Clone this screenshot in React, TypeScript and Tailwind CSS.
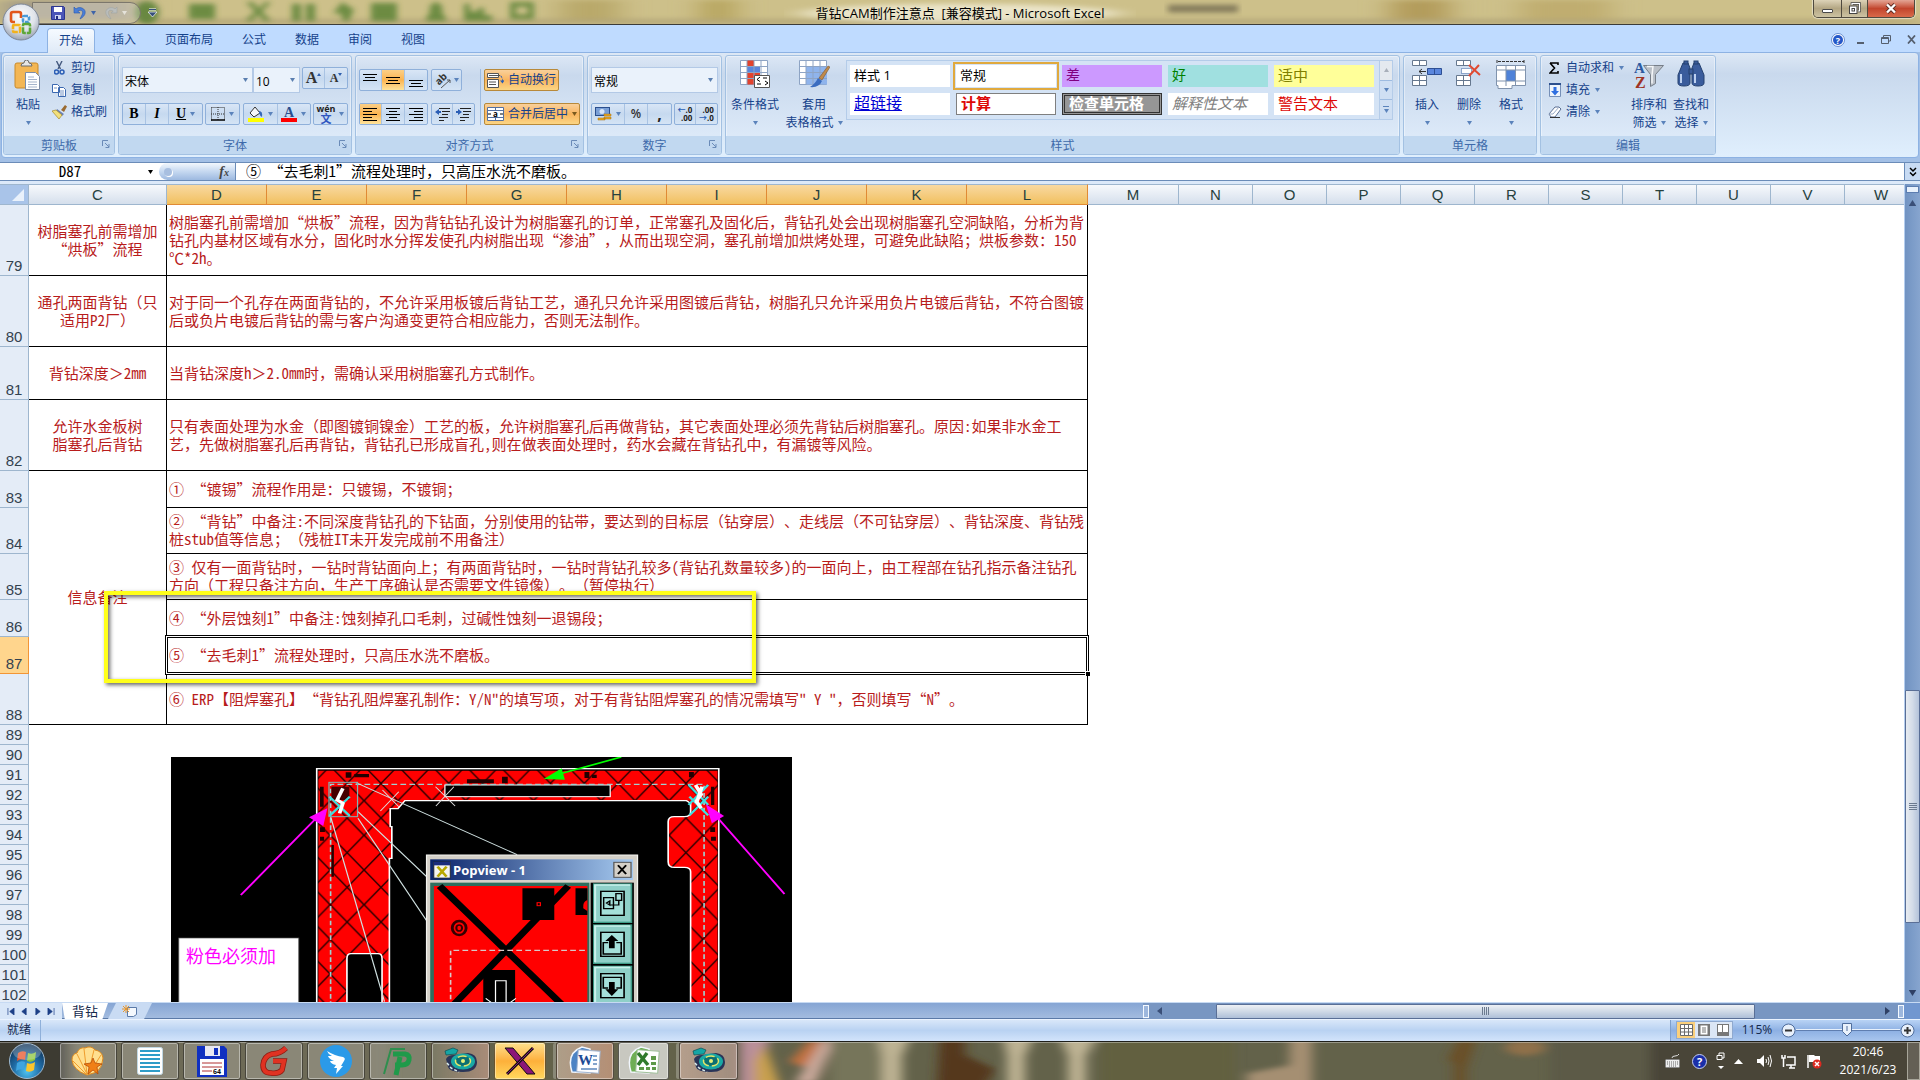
import React from 'react';

const SONG = "font-['Noto_Sans_Mono_CJK_SC','Noto_Sans_CJK_SC',monospace]";

const Caret: React.FC<{ className?: string }> = ({ className = 'text-[#5b83bb]' }) => (
  <svg className={`shrink-0 ${className}`} width="5" height="4" viewBox="0 0 5 4">
    <path d="M0 0h5L2.5 4z" fill="currentColor" />
  </svg>
);

/* ---------- Title bar ---------- */

const OfficeOrb: React.FC = () => (
  <svg className="absolute left-[2px] top-[3px] z-20" width="38" height="38" viewBox="0 0 38 38">
    <defs>
      <radialGradient id="orb" cx="0.5" cy="0.35" r="0.65">
        <stop offset="0" stopColor="#ffffff" />
        <stop offset="0.6" stopColor="#dfe3ea" />
        <stop offset="1" stopColor="#9aa3b3" />
      </radialGradient>
    </defs>
    <circle cx="19" cy="19" r="18" fill="url(#orb)" stroke="#7d8798" />
    <g fill="none" strokeWidth="2.6" strokeLinejoin="round">
      <path d="M17 9h-6q-2 0-2 2v6q0 2 2 2h2M17 9q2 0 2 2v4" stroke="#e2561b" />
      <rect x="21" y="13" width="6" height="6" rx="1" stroke="#4a9ad8" strokeDasharray="4 1" />
      <rect x="11" y="22" width="7" height="7" rx="1" stroke="#f2b21c" strokeDasharray="6 1" />
      <rect x="21" y="21" width="7" height="9" rx="1" stroke="#5da739" strokeDasharray="8 1" />
    </g>
  </svg>
);

const TitleBackdrop: React.FC = () => (
  <svg className="absolute inset-0 w-full h-full" viewBox="0 0 1920 25" preserveAspectRatio="none">
    <defs>
      <filter id="soft" x="-5%" y="-50%" width="110%" height="200%"><feGaussianBlur stdDeviation="3" /></filter>
      <filter id="wide" x="-5%" y="-50%" width="110%" height="200%"><feGaussianBlur stdDeviation="14 3" /></filter>
    </defs>
    <rect width="1920" height="25" fill="#cdc08a" />
    <g filter="url(#wide)">
      <rect x="0" y="0" width="140" height="25" fill="#a59c86" />
      <rect x="560" y="0" width="60" height="25" fill="#b9a96b" />
      <rect x="700" y="0" width="36" height="25" fill="#b7a55f" />
      <rect x="1390" y="0" width="60" height="25" fill="#b39c5b" />
      <rect x="1520" y="0" width="90" height="25" fill="#c0ad70" />
      <rect x="0" y="20" width="1920" height="5" fill="#b3a678" />
    </g>
    <g filter="url(#soft)" fill="#4e7a2c" opacity="0.75">
      <circle cx="147" cy="13" r="12" />
      <rect x="189" y="4" width="26" height="16" />
      <path d="M246 2h7l6 7 6-7h6l-9 10 9 10h-7l-6-7-6 7h-7l10-10z" />
      <rect x="292" y="4" width="9" height="18" /><rect x="306" y="4" width="9" height="18" />
      <path d="M333 14l9-12 12 8-5 12h-6l-2-8z" />
      <rect x="371" y="3" width="26" height="19" />
      <path d="M425 22l5-10q-2-8 6-10 8 2 6 10l5 10z" />
      <path d="M464 22V4h6v8h8V8h6v8h8v6z" />
      <path d="M510 2h24v18h-24zM516 7v8h12V7z" fillRule="evenodd" />
    </g>
    <ellipse cx="960" cy="14" rx="160" ry="10" fill="#fffdf2" opacity="0.6" filter="url(#wide)" />
    <g filter="url(#soft)" fill="#54503c" opacity="0.6"><rect x="1168" y="5" width="70" height="8" /></g>
  </svg>
);

const TitleBar: React.FC = () => (
  <header className="relative h-[25px] shrink-0 border-b border-[#3b3b38] flex items-start justify-center">
    <TitleBackdrop />
    <div className="absolute left-[32px] top-[2px] h-[22px] w-[109px] rounded-r-full border border-[#7c776c] bg-white/25 pl-[18px] flex items-center gap-1">
      <button aria-label="保存">
        <svg width="14" height="14" viewBox="0 0 14 14">
          <path d="M0.500.500h12l1 1v12h-13z" fill="#4b55b8" stroke="#2b3590" />
          <path d="M3 1h8v5H3z" fill="#fff" /><path d="M4 9h6v4H4z" fill="#cfd5f2" /><path d="M5 10h2v3H5z" fill="#222c80" />
        </svg>
      </button>
      <button aria-label="撤消" className="ml-1 flex items-center gap-1">
        <svg width="14" height="14" viewBox="0 0 14 14">
          <path d="M1 1v6h6L4.800 5.200C8 3 11 5 9 9l-2 4c6-3 7-9 2-11-3-1-5 0-6 1z" fill="#4a7fd8" stroke="#2a58ad" strokeWidth="0.600" />
        </svg>
        <Caret className="text-[#3f64a8]" />
      </button>
      <button aria-label="恢复" className="ml-1 flex items-center gap-1 opacity-60">
        <svg width="14" height="14" viewBox="0 0 14 14">
          <path d="M13 1v6H7l2.200-1.800C6 3 3 5 5 9l2 4C1 10 0 4 5 2c3-1 5 0 6 1z" fill="#b9c3cc" stroke="#8c979f" strokeWidth="0.600" />
        </svg>
        <Caret className="text-white" />
      </button>
    </div>
    <button aria-label="自定义快速访问工具栏" className="absolute left-[148px] top-[8px]">
      <svg width="9" height="9" viewBox="0 0 9 9"><path d="M1 1.500h7" stroke="#fff" strokeWidth="2" /><path d="M1 1.500h7" stroke="#37507c" /><path d="M0 4h9L4.500 9z" fill="#37507c" stroke="#fff" strokeWidth="0.700" /></svg>
    </button>
    <OfficeOrb />
    <h1 className="relative text-[13px] leading-[26px] text-black whitespace-pre">背钻CAM制作注意点  [兼容模式] - Microsoft Excel</h1>
    <div className="absolute right-[5px] top-0 flex h-[18px] rounded-b-[5px] border border-t-0 border-[#4f4a3f] overflow-hidden shadow-[0_0_1px_1px_rgba(255,255,255,0.5)]">
      <button aria-label="最小化" className="w-[28px] border-r border-[#4f4a3f] bg-linear-to-b from-[#ddd3b8] via-[#b3a683] to-[#cdc3a3] flex items-center justify-center">
        <span className="mt-1 h-[4px] w-[11px] border border-[#4a4a4a] bg-white rounded-[1px]" />
      </button>
      <button aria-label="向下还原" className="w-[26px] border-r border-[#4f4a3f] bg-linear-to-b from-[#ddd3b8] via-[#b3a683] to-[#cdc3a3] flex items-center justify-center">
        <svg width="13" height="13" viewBox="0 0 13 13" fill="none"><path d="M4 3V1.500h7.500V9H10" stroke="#444" strokeWidth="2.600" /><path d="M4 3V1.500h7.500V9H10" stroke="#fff" strokeWidth="1.200" /><rect x="1.500" y="4" width="7.500" height="7.500" fill="#fff" stroke="#444" /><rect x="4" y="6.500" width="2.500" height="2.500" stroke="#444" /></svg>
      </button>
      <button aria-label="关闭" className="w-[46px] bg-linear-to-b from-[#e3a595] via-[#c2452d] to-[#d9694a] flex items-center justify-center">
        <svg width="12" height="11" viewBox="0 0 12 11"><path d="M2 1.500l8 8M10 1.500l-8 8" stroke="#5b2a22" strokeWidth="4" /><path d="M2 1.500l8 8M10 1.500l-8 8" stroke="#fff" strokeWidth="2.400" /></svg>
      </button>
    </div>
  </header>
);

/* ---------- Ribbon ---------- */

const TABS = [
  { name: '插入', width: 'w-12' },
  { name: '页面布局', width: 'w-[72px]' },
  { name: '公式', width: 'w-12' },
  { name: '数据', width: 'w-12' },
  { name: '审阅', width: 'w-12' },
  { name: '视图', width: 'w-12' },
];

const TabStrip: React.FC = () => (
  <nav className="h-[27px] shrink-0 bg-[#bfdbff] flex items-end pl-[47px] pr-[4px] text-xs text-[#15428b]">
    <button className="relative z-10 -mb-px h-[25px] w-[48px] mr-[5px] rounded-t-[4px] border border-b-0 border-[#8db2e3] bg-linear-to-b from-[#f6faff] to-[#dfeaf7]">开始</button>
    <div className="flex gap-[5px]">
      {TABS.map(t => (
        <button key={t.name} className={`h-[25px] ${t.width}`}>{t.name}</button>
      ))}
    </div>
    <div className="ml-auto flex items-center h-[25px] gap-4">
      <button aria-label="帮助">
        <svg width="14" height="14" viewBox="0 0 14 14"><circle cx="7" cy="7" r="6.500" fill="#fff" stroke="#6b8fd0" /><circle cx="7" cy="7" r="5" fill="#2558c8" /><text x="7" y="10.500" fontSize="9" fontWeight="bold" textAnchor="middle" fill="#fff">?</text></svg>
      </button>
      <button aria-label="最小化窗口" className="-ml-1"><svg width="8" height="10" viewBox="0 0 8 10"><path d="M0 8h7" stroke="#555f6e" strokeWidth="2" /></svg></button>
      <button aria-label="还原窗口"><svg width="10" height="9" viewBox="0 0 10 9" fill="none" stroke="#555f6e"><path d="M2.500 2V.500h7V6H8M.500 2.500h7v6h-7z" /><path d="M.500 3.500h7" /></svg></button>
      <button aria-label="关闭窗口"><svg width="9" height="9" viewBox="0 0 9 9"><path d="M1 .500l7 8M8 .500l-7 8" stroke="#555f6e" strokeWidth="1.800" /></svg></button>
    </div>
  </nav>
);

const Group: React.FC<{ label: string; width: string; launcher?: boolean; children: React.ReactNode }> = ({ label, width, launcher, children }) => (
  <section className={`${width} h-[100px] shrink-0 flex flex-col rounded-[3px] border border-[#a3c1e2] shadow-[inset_0_0_0_1px_rgba(255,255,255,0.4)] bg-linear-to-b from-[#dce7f5] from-0% via-[#c9d9ed] via-20% to-[#dce9f8] to-80% overflow-hidden`}>
    <div className="h-[80px] shrink-0">{children}</div>
    <div className="relative flex-1 bg-[#c1d8f0] text-center text-xs leading-[19px] text-[#3e6aaa]">
      {label}
      {launcher && (
        <button aria-label={`${label}设置`} className="absolute right-[4px] top-[4px]">
          <svg width="8" height="8" viewBox="0 0 8 8" fill="none" stroke="#6a8bb8"><path d="M.500 6V.500H6M3 3l4 4M7 4v3.500H3.500" /></svg>
        </button>
      )}
    </div>
  </section>
);

const SmallButton: React.FC<{ icon: React.ReactNode; label: string; caret?: boolean }> = ({ icon, label, caret }) => (
  <button className="flex h-[22px] items-center gap-[5px] text-xs text-[#15428b] whitespace-nowrap">
    <span className="w-[13px] flex justify-center">{icon}</span>
    {label}
    {caret && <Caret />}
  </button>
);

const BigButton: React.FC<{ icon: React.ReactNode; lines: string[]; width: string }> = ({ icon, lines, width }) => (
  <button className={`${width} flex flex-col items-center text-xs leading-[17px] text-[#15428b] whitespace-nowrap`}>
    <span className="h-[36px] pt-[4px]">{icon}</span>
    <span className="h-[20px] pt-1">{lines[0]}</span>
    <span className="h-[17px] flex items-center gap-1 pt-1">{lines[1]}<Caret /></span>
  </button>
);

const ButtonBox: React.FC<{ children: React.ReactNode; className?: string }> = ({ children, className = '' }) => (
  <div className={`h-[22px] flex items-stretch rounded-[2px] border border-[#8fb0da] bg-linear-to-b from-[#d9e6f6] via-[#c6d9ef] to-[#d5e4f5] divide-x divide-[#a9c3e3] ${className}`}>{children}</div>
);

const Tool: React.FC<{ label: string; width: string; caret?: boolean; active?: boolean; children: React.ReactNode }> = ({ label, width, caret, active, children }) => (
  <button aria-label={label} aria-pressed={active} className={`${width} flex items-center justify-center gap-1 ${active ? 'bg-linear-to-b from-[#fbcf86] via-[#fbb44f] to-[#fee39a]' : ''}`}>
    {children}
    {caret && <Caret />}
  </button>
);

const Picker: React.FC<{ label: string; value: string; width: string }> = ({ label, value, width }) => (
  <div className={`relative h-[26px] ${width} border border-[#b3c9e6] bg-[#eaf2fb]`}>
    <select aria-label={label} defaultValue={value} className="appearance-none w-full h-full pl-[2px] pb-[3px] bg-transparent text-xs text-black outline-none">
      <option>{value}</option>
    </select>
    <Caret className="absolute right-1 top-[10px] text-[#5b7fb0] pointer-events-none" />
  </div>
);

const Lines: React.FC<{ rows: [number, number, number][] }> = ({ rows }) => (
  <svg width="15" height="16" viewBox="0 0 15 16" stroke="#000" strokeWidth="1">
    {rows.map(([x1, x2, y]) => <path key={y} d={`M${x1} ${y + 0.5}H${x2}`} />)}
  </svg>
);

const ClipboardGroup: React.FC = () => (
  <Group label="剪贴板" width="w-[112px]" launcher>
    <div className="flex gap-1 pl-[3px]">
      <BigButton width="w-[42px]" lines={['粘贴', '']} icon={
        <svg width="28" height="30" viewBox="0 0 28 30">
          <rect x="1" y="3" width="23" height="25" rx="2" fill="#f3b654" stroke="#c98a2b" />
          <path d="M7 6q0-3 3-3 0-3 2.500-3t2.500 3q3 0 3 3z" fill="#e6e6e6" stroke="#6c6c6c" />
          <path d="M11.500 12.500h10l4 4v13h-14z" fill="#fff" stroke="#7c8da8" />
          <path d="M14 17h6M14 19.500h9M14 22h9M14 24.500h9M14 27h9" stroke="#a5b4cb" />
        </svg>
      } />
      <div className="pt-px">
        <SmallButton label="剪切" icon={<svg width="11" height="14" viewBox="0 0 11 14" fill="none"><path d="M2.500 0l4 8M8 0L4 8" stroke="#44597e" strokeWidth="1.400" /><circle cx="2.500" cy="11" r="2" stroke="#2b5eb5" strokeWidth="1.500" /><circle cx="8" cy="11" r="2" stroke="#2b5eb5" strokeWidth="1.500" /></svg>} />
        <SmallButton label="复制" icon={<svg className="shrink-0" width="15" height="13" viewBox="0 0 15 13" fill="#fff" stroke="#3b68b0"><path d="M.500.500h5l2 2v6h-7zM6.500 3.500h5l2 2v7h-7z" /><path d="M2 4h3M8 7h4M8 9h4M8 11h4" strokeWidth="0.700" /></svg>} />
        <SmallButton label="格式刷" icon={<svg className="shrink-0" width="15" height="14" viewBox="0 0 15 14"><path d="M9 5l4-5 2 1.500L12 7z" fill="#9a6b32" /><path d="M5 4l7 5-2 2-6-5z" fill="#6a7fb5" /><path d="M0 6l4-1 6 5-3 4z" fill="#f2e07c" stroke="#a88b26" strokeWidth="0.700" /></svg>} />
      </div>
    </div>
  </Group>
);

const FontGroup: React.FC = () => (
  <Group label="字体" width="w-[234px]" launcher>
    <div className="px-[3px] pt-[11px] flex flex-col gap-[10px]">
      <div className="flex justify-between">
        <div className="flex">
          <Picker label="字体" value="宋体" width="w-[131px]" />
          <Picker label="字号" value="10" width="w-[47px]" />
        </div>
        <ButtonBox>
          <Tool label="增大字号" width="w-[22px]"><span className="font-['Liberation_Serif',serif] font-bold text-base leading-5 text-[#333]">A</span><svg className="-ml-1 -mt-2 shrink-0" width="4" height="3" viewBox="0 0 4 3"><path d="M0 3h4L2 0z" fill="#2f5fae" /></svg></Tool>
          <Tool label="减小字号" width="w-[22px]"><span className="font-['Liberation_Serif',serif] font-bold text-xs leading-5 text-[#333]">A</span><svg className="-ml-1 -mt-2 shrink-0" width="4" height="3" viewBox="0 0 4 3"><path d="M0 0h4L2 3z" fill="#2f5fae" /></svg></Tool>
        </ButtonBox>
      </div>
      <div className="flex justify-between">
        <ButtonBox className="font-['Liberation_Serif',serif] text-sm text-black">
          <Tool label="加粗" width="w-[23px]"><b>B</b></Tool>
          <Tool label="倾斜" width="w-[23px]"><i className="font-bold">I</i></Tool>
          <Tool label="下划线" width="w-[33px]" caret><span className="underline font-bold">U</span></Tool>
        </ButtonBox>
        <ButtonBox>
          <Tool label="边框" width="w-[33px]" caret>
            <svg width="14" height="14" viewBox="0 0 14 14" fill="none" stroke="#333"><path d="M.500.500h13v13M.500.500v13M7 0v13M0 7h14" strokeDasharray="1 1" /><path d="M0 13h14" stroke="#000" strokeWidth="1.500" /></svg>
          </Tool>
        </ButtonBox>
        <ButtonBox>
          <Tool label="填充颜色" width="w-[34px]" caret>
            <svg width="16" height="16" viewBox="0 0 16 16"><path d="M7 1l5 6-6 4-4-4z" fill="#f5f7fb" stroke="#333" /><path d="M11 5q4 0 3 6-2-1-3-4z" fill="#3568b8" /><rect y="12" width="16" height="4" fill="#ff0" /></svg>
          </Tool>
          <Tool label="字体颜色" width="w-[32px]" caret>
            <svg width="16" height="16" viewBox="0 0 16 16"><text x="8" y="11" fontSize="14" fontWeight="bold" textAnchor="middle" fontFamily="Liberation Serif" fill="#2c4f8f">A</text><rect y="12" width="16" height="4" fill="#f00" /></svg>
          </Tool>
        </ButtonBox>
        <ButtonBox>
          <Tool label="拼音" width="w-[33px]" caret>
            <span className="flex flex-col items-center text-[9px] leading-[9px] font-bold text-[#222]">
              <span>wén</span>
              <span className="text-[11px] leading-[11px] text-[#2f56c0]">文</span>
            </span>
          </Tool>
        </ButtonBox>
      </div>
    </div>
  </Group>
);

const AlignGroup: React.FC = () => (
  <Group label="对齐方式" width="w-[229px]" launcher>
    <div className="flex px-[3px] pt-[13px]">
      <div className="flex flex-col gap-[12px] border-r border-[#9dbbe0] pr-[4px] w-[122px] shrink-0">
        <div className="flex gap-[3px]">
          <ButtonBox>
            <Tool label="顶端对齐" width="w-[22px]"><Lines rows={[[0, 14, 2], [2, 12, 5], [0, 14, 8]]} /></Tool>
            <Tool label="垂直居中" width="w-[23px]" active><Lines rows={[[0, 14, 5], [2, 12, 8], [0, 14, 11]]} /></Tool>
            <Tool label="底端对齐" width="w-[22px]"><Lines rows={[[0, 14, 8], [2, 12, 11], [0, 14, 14]]} /></Tool>
          </ButtonBox>
          <ButtonBox>
            <Tool label="方向" width="w-[29px]" caret>
              <svg className="overflow-visible" width="15" height="15" viewBox="0 0 15 15"><text x="7" y="9" fontSize="10" fontWeight="bold" textAnchor="middle" fill="#333" transform="rotate(-45 7 7)">ab</text><path d="M6 15l9-8M12 7h3v3" stroke="#555" fill="none" /></svg>
            </Tool>
          </ButtonBox>
        </div>
        <div className="flex gap-[3px]">
          <ButtonBox>
            <Tool label="左对齐" width="w-[22px]" active><Lines rows={[[0, 14, 2], [0, 9, 5], [0, 14, 8], [0, 9, 11], [0, 14, 14]]} /></Tool>
            <Tool label="居中" width="w-[23px]"><Lines rows={[[0, 14, 2], [3, 11, 5], [0, 14, 8], [3, 11, 11], [0, 14, 14]]} /></Tool>
            <Tool label="右对齐" width="w-[22px]"><Lines rows={[[0, 14, 2], [5, 14, 5], [0, 14, 8], [5, 14, 11], [0, 14, 14]]} /></Tool>
          </ButtonBox>
          <ButtonBox>
            <Tool label="减少缩进" width="w-[21px]">
              <svg width="15" height="15" viewBox="0 0 15 15"><path d="M0 5l4-3v2h2v2H4v2z" fill="#2b5eb5" /><path d="M4 1.500h11M7 4.500h8M7 7.500h6M4 10.500h9M4 13.500h5" stroke="#222" /></svg>
            </Tool>
            <Tool label="增加缩进" width="w-[21px]">
              <svg width="15" height="15" viewBox="0 0 15 15"><path d="M6 5L2 2v2H0v2h2v2z" fill="#2b5eb5" /><path d="M4 1.500h11M7 4.500h8M7 7.500h6M4 10.500h9M4 13.500h5" stroke="#222" /></svg>
            </Tool>
          </ButtonBox>
        </div>
      </div>
      <div className="flex flex-col items-start gap-[12px] pl-[3px] text-xs text-[#15428b] whitespace-nowrap">
        <button aria-pressed="true" className="h-[22px] px-[2px] flex items-center gap-1 rounded-[2px] border border-[#b8893a] bg-linear-to-b from-[#f9d09a] via-[#f9b55e] to-[#fbd584]">
          <svg width="17" height="16" viewBox="0 0 17 16" fill="#fff" stroke="#555"><path d="M.500 1.500h11v4H.500zM.500 7.500h11v8H.500z" /><path d="M2 3.500h11M2 10h7M2 12.500h7" /><path d="M13 3.500q3 0 2 5l-2 0 2.500 3 2-3h-1" fill="#2b5eb5" stroke="none" /></svg>
          自动换行
        </button>
        <button aria-pressed="true" className="h-[22px] px-[2px] flex items-center gap-1 rounded-[2px] border border-[#b8893a] bg-linear-to-b from-[#f9d09a] via-[#f9b55e] to-[#fbd584]">
          <svg width="17" height="14" viewBox="0 0 17 14" fill="#fff" stroke="#5470a0"><path d="M.500.500h16v13H.500zM.500 3.500h16M.500 10.500h16M8.500.500v3M8.500 10.500v3" /><text x="8.500" y="9.500" fontSize="8" fontWeight="bold" textAnchor="middle" fill="#000" stroke="none">a</text><path d="M1 7h3M16 7h-3" stroke="#000" /></svg>
          合并后居中
          <Caret className="text-[#7a5a1e]" />
        </button>
      </div>
    </div>
  </Group>
);

const NumberGroup: React.FC = () => (
  <Group label="数字" width="w-[135px]" launcher>
    <div className="px-[3px] pt-[11px] flex flex-col gap-[10px]">
      <Picker label="数字格式" value="常规" width="w-full" />
      <div className="flex justify-between">
        <ButtonBox>
          <Tool label="会计数字格式" width="w-[33px]" caret>
            <svg width="17" height="16" viewBox="0 0 17 16"><rect x="0.500" y="1.500" width="14" height="8" fill="#7a9fd6" stroke="#2b4f8e" /><circle cx="7" cy="5.500" r="2.500" fill="#d6e4f7" /><path d="M9 8h7v2H9zM9 11h7v2H9zM3 12h7v2H3z" fill="#e9a623" stroke="#a8700c" strokeWidth="0.500" /></svg>
          </Tool>
          <Tool label="百分比样式" width="w-[23px]"><span className="text-xs font-semibold text-[#333]">%</span></Tool>
          <Tool label="千位分隔样式" width="w-[23px]"><span className="text-base leading-3 font-bold text-[#222]">,</span></Tool>
        </ButtonBox>
        <ButtonBox className="text-[8px] leading-[8px] font-bold text-[#222]">
          <Tool label="增加小数位数" width="w-[21px]"><span className="text-right"><span className="text-[#2b5eb5]">←</span>.0<br />.00</span></Tool>
          <Tool label="减少小数位数" width="w-[21px]"><span className="text-right">.00<br /><span className="text-[#2b5eb5]">→</span>.0</span></Tool>
        </ButtonBox>
      </div>
    </div>
  </Group>
);

const STYLES = [
  { name: '样式 1', look: 'bg-white text-black text-[13px]' },
  { name: '常规', look: 'bg-white text-black text-[13px] outline-2 outline-offset-1 outline-[#e0a93e]' },
  { name: '差', look: 'bg-[#cc99ff] text-[#800080] text-sm' },
  { name: '好', look: 'bg-[#a0e0e0] text-[#008000] text-sm' },
  { name: '适中', look: 'bg-[#ffff99] text-[#808000] text-[15px]' },
  { name: '超链接', look: 'bg-white text-[#0000d4] underline text-base' },
  { name: '计算', look: 'bg-white text-[#dd0806] font-bold text-[15px] border border-[#7f7f7f]' },
  { name: '检查单元格', look: 'bg-[#969696] text-white font-bold text-[15px] border-3 border-double border-[#333333]' },
  { name: '解释性文本', look: 'bg-white text-[#808080] italic text-[15px]' },
  { name: '警告文本', look: 'bg-white text-[#dd0806] text-[15px]' },
];

const StylesGroup: React.FC = () => (
  <Group label="样式" width="w-[675px]">
    <div className="flex pl-[2px]">
      <BigButton width="w-[54px]" lines={['条件格式', '']} icon={
        <svg width="31" height="28" viewBox="0 0 31 28">
          <path d="M.500.500h27v24H.500z" fill="#fff" stroke="#8ea4c4" />
          <path d="M7 .500h7v6H7zM7 12.500h13v6H7z" fill="#e2432e" /><path d="M7 6.500h13v6H7z" fill="#5a86dd" /><path d="M7 18.500h7v6H7z" fill="#e2432e" />
          <path d="M7 0v25M14 0v25M21 0v25M0 6.500h28M0 12.500h28M0 18.500h28" stroke="#8ea4c4" />
          <path d="M14.500 15.500h15v12h-15z" fill="#fff" stroke="#555" /><path d="M20 17l-3 2.500 3 2M17 24h4M23 18h4M25 21l3 2-3 2" stroke="#000" fill="none" />
        </svg>
      } />
      <BigButton width="w-[64px]" lines={['套用', '表格格式']} icon={
        <svg width="31" height="28" viewBox="0 0 31 28">
          <path d="M.500.500h27v24H.500z" fill="#fff" stroke="#8ea4c4" /><path d="M7 6.500h21v18H7z" fill="#8fb4ec" />
          <path d="M7 0v25M14 0v25M21 0v25M0 6.500h28M0 12.500h28M0 18.500h28" stroke="#8ea4c4" />
          <path d="M29 6l2 1-8 13-3-2z" fill="#c08a4a" stroke="#6e4b20" strokeWidth="0.500" /><path d="M19 18l4 3q-3 7-12 6 5-3 8-9z" fill="#3a6cc0" />
        </svg>
      } />
      <div className="mt-[4px] h-[60px] flex-1 mr-[6px] flex border border-[#b4cce9] bg-[#d4e3f5]">
        <div className="flex-1 grid grid-cols-5 gap-[6px] pl-[3px] pr-[5px] py-[4px]">
          {STYLES.map(s => (
            <button key={s.name} className={`h-[22px] pl-[4px] pb-[3px] flex items-center text-left leading-[18px] whitespace-nowrap ${s.look}`}>{s.name}</button>
          ))}
        </div>
        <div className="w-[13px] flex flex-col divide-y divide-[#9ebbe0] border-l border-[#b4cce9]">
          <button aria-label="上一行" className="flex-1 bg-[#e4e9ef] flex items-center justify-center"><Caret className="rotate-180 text-[#a9b0ba]" /></button>
          <button aria-label="下一行" className="flex-1 bg-[#cfdff3] flex items-center justify-center"><Caret /></button>
          <button aria-label="更多样式" className="flex-1 bg-[#cfdff3] flex flex-col gap-[2px] items-center justify-center"><span className="h-px w-[6px] bg-[#5b83bb]" /><Caret /></button>
        </div>
      </div>
    </div>
  </Group>
);

const CellsGroup: React.FC = () => (
  <Group label="单元格" width="w-[134px]">
    <div className="flex pl-[2px]">
      <BigButton width="w-[42px]" lines={['插入', '']} icon={
        <svg width="30" height="27" viewBox="0 0 30 27" fill="#fff" stroke="#66788f"><path d="M.500.500h14v5H.500zM7.500.500v5M.500 15.500h14v10H.500zM.500 20.500h14M7.500 15.500v10" /><path d="M15.500 8.500h14v6h-14z" fill="#5a86dd" stroke="#2d4f94" /><path d="M22.500 8.500v6" stroke="#2d4f94" /><path d="M14 11.500H7M10 9l-3 2.500L10 14" stroke="#333" fill="none" /></svg>
      } />
      <BigButton width="w-[42px]" lines={['删除', '']} icon={
        <svg width="26" height="27" viewBox="0 0 26 27" fill="#fff" stroke="#66788f"><path d="M.500.500h14v5H.500zM7.500.500v5M.500 15.500h14v10H.500zM.500 20.500h14M7.500 15.500v10" /><path d="M5.500 8.500h10v5h-10z" stroke="#335c9c" strokeDasharray="1 1" /><path d="M13 5l11 10M23 5L13 16" stroke="#e04a32" strokeWidth="2" /></svg>
      } />
      <BigButton width="w-[42px]" lines={['格式', '']} icon={
        <svg width="31" height="29" viewBox="0 0 31 29" fill="#fff" stroke="#8093ad"><path d="M2 1.500h26M1 0v3M28 0v3" stroke="#333" strokeDasharray="3 1" /><path d="M.500 5.500h29v20H16v3H2v-3H.500z" /><path d="M10 10h9v11h-9z" fill="#4f82d8" stroke="none" /><path d="M10 5v21M19.500 5v21M0 10h30M0 21h30" /></svg>
      } />
    </div>
  </Group>
);

const EditGroup: React.FC = () => (
  <Group label="编辑" width="w-[176px]">
    <div className="flex pl-[7px]">
      <div className="pt-px w-[80px] shrink-0">
        <SmallButton caret label="自动求和" icon={<svg width="11" height="12" viewBox="0 0 11 12"><path d="M1 1h8v2M1 1l4.500 5L1 11h8V9" stroke="#000" strokeWidth="1.600" fill="none" /></svg>} />
        <SmallButton caret label="填充" icon={<svg width="12" height="14" viewBox="0 0 12 14"><path d="M.500.500h11v13H.500z" fill="#eef4fc" stroke="#7690b8" /><path d="M0 0h12v2H0z" fill="#2b4f8e" /><path d="M4.500 4h3v4H10l-4 4.500L2 8h2.500z" fill="#2f6fe0" /></svg>} />
        <SmallButton caret label="清除" icon={<svg className="shrink-0" width="14" height="12" viewBox="0 0 14 12"><path d="M1 8l6-7h4l2 2-6 8H3z" fill="#fff" stroke="#5a6f92" /><path d="M1 8h4l6-7" fill="none" stroke="#9aabc6" /><path d="M2 11.500h10" stroke="#333" /></svg>} />
      </div>
      <BigButton width="w-[42px]" lines={['排序和', '筛选']} icon={
        <svg width="30" height="30" viewBox="0 0 30 30"><text x="0" y="13" fontSize="15" fontWeight="bold" fontFamily="Liberation Serif" fill="#2c5aa0">A</text><text x="1" y="28" fontSize="16" fontWeight="bold" fontFamily="Liberation Serif" fill="#9e3324">Z</text><path d="M9.500 5.500h20l-8 9v9l-5 3v-12z" fill="#b9bfc7" stroke="#767e88" /><path d="M13 6.500h6l-1 9v8" stroke="#f4f6f8" strokeWidth="1.500" fill="none" /></svg>
      } />
      <BigButton width="w-[42px]" lines={['查找和', '选择']} icon={
        <svg width="28" height="28" viewBox="0 0 28 28" fill="#3a5c9c" stroke="#24406f"><path d="M6 3h5l2 5v15q0 3-6 3t-6-3v-8zM17 3h5l5 12v8q0 3-6 3t-6-3V8z" /><rect x="7" y="1" width="4" height="3" /><rect x="17" y="1" width="4" height="3" /><rect x="12" y="9" width="4" height="5" /><path d="M4 14v9M18 14v9" stroke="#bcd0f0" strokeWidth="2" /></svg>
      } />
    </div>
  </Group>
);

const Ribbon: React.FC = () => (
  <div className="shrink-0 bg-[#a3c0e6] pb-[4px]">
    <div className="h-[106px] mx-px rounded-[4px] border border-[#8db2e3] bg-linear-to-b from-[#dde8f5] from-0% via-[#c9d9ed] via-20% to-[#e0effd] flex gap-[3px] px-px pt-[2px]">
      <ClipboardGroup />
      <FontGroup />
      <AlignGroup />
      <NumberGroup />
      <StylesGroup />
      <CellsGroup />
      <EditGroup />
    </div>
  </div>
);

const FormulaBar: React.FC = () => (
  <div className={`shrink-0 bg-[#dce9f9] pb-[3px] ${SONG} text-[15px] text-black`}>
    <div className="h-[19px] flex border-y border-[#6b8cb8] bg-white">
      <div className="w-[159px] flex items-center pr-[6px]">
        <input aria-label="名称框" defaultValue="D87" className="min-w-0 flex-1 pr-2 text-center outline-none" />
        <Caret className="text-black" />
      </div>
      <div className="w-[77px] rounded-l-full border-r border-[#6b8cb8] bg-linear-to-b from-[#f2f7fd] via-[#c5d8f0] to-[#9db9e0] flex items-center justify-between pl-[5px] pr-[6px]">
        <span className="size-[8px] rounded-full bg-[#a8bfe0] shadow-[1px_1px_0_#fff]" />
        <button className="font-['Liberation_Serif',serif] italic font-bold text-sm leading-none text-[#444]">f<span className="text-[10px]">x</span></button>
      </div>
      <input aria-label="编辑栏" defaultValue="⑤ “去毛刺1”流程处理时，只高压水洗不磨板。" className="min-w-0 flex-1 pl-[10px] outline-none [text-spacing-trim:space-all]" />
      <button aria-label="展开编辑栏" className="w-[16px] border-l border-[#6b8cb8] bg-[#c8dbf3] flex items-center justify-center">
        <svg width="8" height="10" viewBox="0 0 8 10" fill="none" stroke="#000" strokeWidth="1.500"><path d="M1 1l3 3 3-3M1 5.500l3 3 3-3" /></svg>
      </button>
    </div>
  </div>
);

/* ---------- Sheet ---------- */

const COLUMNS = [
  { name: 'C', width: 'w-[138px]', selected: false },
  { name: 'D', width: 'w-[100px]', selected: true },
  { name: 'E', width: 'w-[100px]', selected: true },
  { name: 'F', width: 'w-[100px]', selected: true },
  { name: 'G', width: 'w-[100px]', selected: true },
  { name: 'H', width: 'w-[100px]', selected: true },
  { name: 'I', width: 'w-[100px]', selected: true },
  { name: 'J', width: 'w-[100px]', selected: true },
  { name: 'K', width: 'w-[100px]', selected: true },
  { name: 'L', width: 'w-[121px]', selected: true },
  { name: 'M', width: 'w-[91px]', selected: false },
  { name: 'N', width: 'w-[74px]', selected: false },
  { name: 'O', width: 'w-[74px]', selected: false },
  { name: 'P', width: 'w-[74px]', selected: false },
  { name: 'Q', width: 'w-[74px]', selected: false },
  { name: 'R', width: 'w-[74px]', selected: false },
  { name: 'S', width: 'w-[74px]', selected: false },
  { name: 'T', width: 'w-[74px]', selected: false },
  { name: 'U', width: 'w-[74px]', selected: false },
  { name: 'V', width: 'w-[74px]', selected: false },
  { name: 'W', width: '', selected: false },
];

type Row = { n: number; height: string; title?: string[]; span?: number; text: string[] };

const ROWS: Row[] = [
  {
    n: 79, height: 'h-[71px]', title: ['树脂塞孔前需增加', '“烘板”流程'],
    text: [
      '树脂塞孔前需增加“烘板”流程，因为背钻钻孔设计为树脂塞孔的订单，正常塞孔及固化后，背钻孔处会出现树脂塞孔空洞缺陷，分析为背',
      '钻孔内基材区域有水分，固化时水分挥发使孔内树脂出现“渗油”，从而出现空洞，塞孔前增加烘烤处理，可避免此缺陷；烘板参数：150',
      '℃*2h。',
    ],
  },
  {
    n: 80, height: 'h-[71px]', title: ['通孔两面背钻（只', '适用P2厂）'],
    text: [
      '对于同一个孔存在两面背钻的，不允许采用板镀后背钻工艺，通孔只允许采用图镀后背钻，树脂孔只允许采用负片电镀后背钻，不符合图镀',
      '后或负片电镀后背钻的需与客户沟通变更符合相应能力，否则无法制作。',
    ],
  },
  { n: 81, height: 'h-[53px]', title: ['背钻深度＞2mm'], text: ['当背钻深度h＞2.0mm时，需确认采用树脂塞孔方式制作。'] },
  {
    n: 82, height: 'h-[71px]', title: ['允许水金板树', '脂塞孔后背钻'],
    text: [
      '只有表面处理为水金（即图镀铜镍金）工艺的板，允许树脂塞孔后再做背钻，其它表面处理必须先背钻后树脂塞孔。原因:如果非水金工',
      '艺，先做树脂塞孔后再背钻，背钻孔已形成盲孔,则在做表面处理时，药水会藏在背钻孔中，有漏镀等风险。',
    ],
  },
  { n: 83, height: 'h-[37px]', title: ['信息备注'], span: 6, text: ['① “镀锡”流程作用是：只镀锡，不镀铜；'] },
  {
    n: 84, height: 'h-[46px]',
    text: [
      '② “背钻”中备注:不同深度背钻孔的下钻面，分别使用的钻带，要达到的目标层（钻穿层）、走线层（不可钻穿层）、背钻深度、背钻残',
      '桩stub值等信息；（残桩IT未开发完成前不用备注）',
    ],
  },
  {
    n: 85, height: 'h-[46px]',
    text: [
      '③ 仅有一面背钻时，一钻时背钻面向上；有两面背钻时，一钻时背钻孔较多(背钻孔数量较多)的一面向上，由工程部在钻孔指示备注钻孔',
      '方向（工程只备注方向，生产工序确认是否需要文件镜像）。（暂停执行）',
    ],
  },
  { n: 86, height: 'h-[37px]', text: ['④ “外层蚀刻1”中备注:蚀刻掉孔口毛刺，过碱性蚀刻一退锡段；'] },
  { n: 87, height: 'h-[37px]', text: ['⑤ “去毛刺1”流程处理时，只高压水洗不磨板。'] },
  { n: 88, height: 'h-[51px]', text: ['⑥ ERP【阻焊塞孔】“背钻孔阻焊塞孔制作：Y/N"的填写项，对于有背钻阻焊塞孔的情况需填写" Y "，否则填写“N”。'] },
];

const EMPTY_ROWS = [89, 90, 91, 92, 93, 94, 95, 96, 97, 98, 99, 100, 101, 102];

const RowHead: React.FC<{ n: number }> = ({ n }) => (
  <th scope="row" className={`p-0 align-bottom text-center font-normal text-[15px] leading-[19px] text-[#33424f] font-['Liberation_Sans',sans-serif] border-b border-r ${n === 87 ? 'bg-[#ffd58d] border-[#f29536]' : 'bg-[#e4ecf7] border-[#9eb6ce]'}`}>{n}</th>
);

const Sheet: React.FC = () => (
  <table className="w-[calc(100%+14px)] table-fixed border-separate border-spacing-0">
    <colgroup>
      <col className="w-[29px]" />
      {COLUMNS.map(c => <col key={c.name} className={c.width} />)}
    </colgroup>
    <thead className="font-['Liberation_Sans',sans-serif] text-[15px] leading-[18px] text-[#27413e]">
      <tr className="h-[21px]">
        <th className="p-0 border border-l-0 border-[#9eb6ce] bg-[#a9c4e9]">
          <svg className="ml-auto mr-1" width="12" height="12" viewBox="0 0 12 12"><path d="M12 0v12H0z" fill="#e9f1fb" /></svg>
        </th>
        {COLUMNS.map(c => (
          <th key={c.name} scope="col" className={`p-0 font-normal border-y border-r ${c.selected ? 'border-[#e08a35] border-t-[#9eb6ce] bg-linear-to-b from-[#f9d9a0] to-[#f1c05e]' : 'border-[#9eb6ce] bg-linear-to-b from-[#f7f9fc] to-[#d5dfec]'}`}>{c.name}</th>
        ))}
      </tr>
    </thead>
    <tbody className={`${SONG} text-[15px] leading-[18px] text-[#b81c1c] [text-spacing-trim:space-all]`}>
      {ROWS.map(r => (
        <tr key={r.n} className={r.height}>
          <RowHead n={r.n} />
          {r.title && (
            <td rowSpan={r.span} className="p-0 pb-px text-center align-middle border-r border-b border-black">
              {r.title.map(t => <div key={t} className="whitespace-nowrap">{t}</div>)}
            </td>
          )}
          <td colSpan={9} className="relative p-0 pl-[2px] pb-px align-middle border-r border-b border-black">
            {r.text.map(t => <div key={t} className="whitespace-pre">{t}</div>)}
            {r.n === 87 && (
              <div className="absolute -left-[2px] -right-[2px] -top-[2px] -bottom-[2px] border border-black shadow-[inset_0_0_0_1px_#fff,inset_0_0_0_2px_#000]">
                <span className="absolute -right-[3px] -bottom-[3px] size-[6px] bg-black border border-white" />
              </div>
            )}
          </td>
          <td colSpan={11} />
        </tr>
      ))}
      {EMPTY_ROWS.map(n => (
        <tr key={n} className="h-[20px]">
          <RowHead n={n} />
          <td colSpan={21} className="p-0" />
        </tr>
      ))}
    </tbody>
  </table>
);

const CircuitDrawing: React.FC = () => (
  <svg className="absolute left-[171px] top-[573px]" width="621" height="250" viewBox="0 0 621 250">
    <defs>
      <pattern id="mesh" width="83" height="104" patternUnits="userSpaceOnUse" x="500" y="78">
        <rect width="83" height="104" fill="#ff0000" />
        <path d="M0 0l83 104M83 0L0 104" stroke="#2a0000" strokeWidth="4" />
      </pattern>
      <linearGradient id="caption"><stop offset="0" stopColor="#0a246a" /><stop offset="1" stopColor="#a6caf0" /></linearGradient>
    </defs>
    <rect width="621" height="250" fill="#000" />
    <g transform="translate(-11 -17) scale(0.40816 0.33333)">
      <rect x="384" y="86" width="985" height="760" fill="none" stroke="#fff" strokeWidth="4" />
      <path d="M388 92H1366V820H1300V395Q1300 382 1285 382H1260Q1245 382 1245 365V245Q1245 230 1260 230H1285Q1300 230 1300 215V182H600L583 206H564V260H568V355H562V820H388z" fill="url(#mesh)" />
      <path d="M1300 820V395Q1300 382 1285 382H1260Q1245 382 1245 365V245Q1245 230 1260 230H1285Q1300 230 1300 215V190L1290 182H600L583 206H564V260H568V355H562V820" fill="none" stroke="#fff" strokeWidth="4" />
      <path d="M458 820V655q0-14 10-14h66q10 0 10 14v165z" fill="#000" stroke="#fff" strokeWidth="4" />
      <rect x="698" y="135" width="405" height="35" fill="#000" stroke="#fff" strokeWidth="3" />
      <path d="M418 820V133H1333V820" fill="none" stroke="#9fd0d0" strokeWidth="4" strokeDasharray="14 8" />
      <path d="M455 97h14v16h-14zM476 102h36v10h-36zM752 118h66v12h-66zM838 110h14v20h-14zM1040 96h12v18h-12zM1058 104h12v10h-12zM1296 96h12v16h-12zM392 140h9v60h-9zM420 315h6v95h-6zM1350 140h8v55h-8zM392 262h12v14h-12zM1348 262h12v14h-12zM392 290h10v12h-10zM1350 290h12v12h-12z" fill="#200" />
      <path d="M675 140l48 58M720 140l-44 58M545 150l40 50M585 155l-45 58" stroke="#ddd" strokeWidth="2.500" />
      <path d="M480 128L875 344M485 215L655 412M485 235L655 545M418 230L550 785" stroke="#cfe0e0" strokeWidth="3" />
      <rect x="414" y="127" width="70" height="103" fill="none" stroke="#7fb5b5" strokeWidth="3" />
      <path d="M420 140h44v40h-44z" fill="#400" />
      <path d="M415 170l50 58M465 170l-50 58M1295 135l48 60M1343 135l-48 60M1297 170l46 56M1343 170l-46 56" stroke="#3fe0e0" strokeWidth="6" />
      <path d="M448 145l-14 35 14 10-8 30M1312 135l14 28-12 20 12 22M1328 140l-14 50" stroke="#fff" strokeWidth="9" fill="none" />
      <path d="M198 465L385 232M1530 462L1365 232" stroke="#f0f" strokeWidth="5" />
      <path d="M410 205L365 232 400 258zM1337 192l45 36-30 22z" fill="#f0f" />
      <path d="M1130 51L985 100" stroke="#0f0" strokeWidth="5" />
      <path d="M940 117l44-32 8 34z" fill="#0f0" />

      <rect x="653" y="345" width="517" height="500" fill="#d4d0c8" stroke="#f4f4f0" strokeWidth="3" />
      <rect x="662" y="358" width="497" height="62" fill="url(#caption)" />
      <rect x="671" y="366" width="40" height="48" fill="#f4f4f0" stroke="#222" strokeWidth="2" />
      <rect x="671" y="366" width="40" height="10" fill="#1a2c7c" />
      <path d="M680 380l22 30M702 380l-22 30" stroke="#b8a800" strokeWidth="7" />
      <rect x="1112" y="367" width="42" height="45" fill="#d4d0c8" stroke="#555" strokeWidth="3" />
      <path d="M1122 376l20 26M1142 376l-20 26" stroke="#000" strokeWidth="5" />
      <rect x="662" y="428" width="390" height="400" fill="#2f6e5e" />
      <rect x="671" y="438" width="376" height="390" fill="#f00" />
      <path d="M685 438L990 800M1000 438L715 800" stroke="#000" strokeWidth="18" />
      <path d="M888 445h78v95h-78zM1018 445h29v80h-29zM792 690h78v110h-78z" fill="#000" />
      <rect x="924" y="488" width="8" height="9" fill="none" stroke="#f00" strokeWidth="3" />
      <path d="M1047 480q-12 5-10 25l10 8z" fill="#f00" />
      <ellipse cx="733" cy="564" rx="17" ry="21" fill="none" stroke="#300" strokeWidth="7" /><ellipse cx="733" cy="564" rx="7" ry="9" fill="none" stroke="#300" strokeWidth="5" />
      <path d="M822 790V722h26v68M798 775l24 22M872 775l-24 22" fill="none" stroke="#fff" strokeWidth="3" />
      <path d="M712 800V631H1047" fill="none" stroke="#d8c8c8" strokeWidth="4" strokeDasharray="14 8" />
      <rect x="1055" y="428" width="106" height="400" fill="#000" />
      {[432, 555, 679].map(y => (
        <g key={y}>
          <rect x="1063" y={y} width="92" height="115" fill="#8fd0c8" stroke="#3f9c88" strokeWidth="4" />
          <path d={`M1066 ${y + 112}V${y + 3}H1152`} fill="none" stroke="#c9f2ec" strokeWidth="5" />
          <rect x="1080" y={y + 22} width="57" height="72" fill="#a5e0da" stroke="#000" strokeWidth="4" />
        </g>
      ))}
      <path d="M1087 473h24v33h-24zM1117 461h14v20h-14zM1124 481v14h-20M1094 489l8-6v12z" fill="none" stroke="#000" strokeWidth="3.500" />
      <path d="M1098 608h-12v34h44v-34h-12" fill="none" stroke="#000" strokeWidth="4" /><path d="M1107 585l16 18h-9v22h-14v-22h-9z" fill="#000" />
      <path d="M1098 744h-12v-32h44v32h-12" fill="none" stroke="#000" strokeWidth="4" /><path d="M1107 768l16-20h-9v-22h-14v22h-9z" fill="#000" />
      <rect x="46" y="594" width="294" height="240" fill="#fff" stroke="#555" strokeWidth="2" />
    </g>
    <text x="282" y="118" fontSize="13" fontWeight="bold" fill="#fff" fontFamily="Open Sans">Popview - 1</text>
    <text x="15" y="206" fontSize="18" fill="#f0f" fontFamily="Noto Sans CJK SC">粉色必须加</text>
  </svg>
);

const VerticalScrollbar: React.FC = () => (
  <div className="w-[16px] shrink-0 flex flex-col items-center border-l border-[#b4cdee] bg-linear-to-r from-[#7193c2] to-[#87a5cf]">
    <span className="h-[7px] w-[13px] mt-[2px] border border-[#5c7db0] bg-[#e8f1fc]" />
    <Caret className="mt-2 rotate-180 text-[#3a4f78] scale-150" />
    <div className="flex-[487]" />
    <div className="flex-[233] w-[15px] rounded-[1px] border border-[#5a6f96] bg-linear-to-r from-[#e8ecf1] via-[#d3dce8] to-[#b4c3da] flex flex-col items-center justify-center gap-[1px]">
      <span className="h-px w-2 bg-[#6b7a8f]" />
      <span className="h-px w-2 bg-[#6b7a8f]" />
      <span className="h-px w-2 bg-[#6b7a8f]" />
      <span className="h-px w-2 bg-[#6b7a8f]" />
    </div>
    <div className="flex-[68]" />
    <Caret className="mb-[7px] text-[#2f4064] scale-150" />
  </div>
);

const NAV = [
  { label: '第一张', d: 'M1 0v8M8 0v8L3 4z' },
  { label: '上一张', d: 'M7 0v8L2 4z' },
  { label: '下一张', d: 'M2 0v8l5-4z' },
  { label: '最后一张', d: 'M1 0v8l5-4zM8 0v8' },
];

const SheetTabs: React.FC = () => (
  <div className="h-[17px] shrink-0 flex border-t border-[#c7daf3] bg-linear-to-b from-[#86a5d4] to-[#a5bde0] shadow-[inset_0_-1px_0_#5b7aa8]">
    <div className="w-[62px] flex items-center justify-around bg-[#d8e6f8] px-1">
      {NAV.map(b => (
        <button key={b.label} aria-label={b.label}><svg width="8" height="7" viewBox="0 0 9 8"><path d={b.d} fill="#1c3f86" stroke="#1c3f86" strokeWidth="0.800" /></svg></button>
      ))}
    </div>
    <button className="w-[46px] bg-white text-[13px] leading-[16px] text-[#15294d] [clip-path:polygon(0_0,100%_0,88%_100%,6%_100%)]">背钻</button>
    <button aria-label="插入工作表" className="w-[44px] bg-[#c9dbf3] flex items-center justify-center [clip-path:polygon(18%_0,100%_0,82%_100%,0_100%)]">
      <svg width="16" height="13" viewBox="0 0 16 13"><path d="M5.500 2.500h9v7l-3 2h-6z" fill="#f4f8fd" stroke="#5b7aa8" /><path d="M4 0v8M0 4h8M1 1l6 6M7 1L1 7" stroke="#e8962b" /></svg>
    </button>
    <div className="flex-1" />
    <div className="w-[761px] flex items-center bg-[#7896c2]">
      <span className="h-[13px] w-[6px] border border-[#f4f9ff] bg-[#9db7dd]" />
      <svg className="ml-[8px]" width="5" height="8" viewBox="0 0 5 8"><path d="M5 0v8L0 4z" fill="#3a4f78" /></svg>
      <div className="flex-[54]" />
      <div className="flex-[538] h-[15px] rounded-[1px] border border-[#5a6f96] bg-linear-to-b from-[#eef1f5] via-[#cfd9e6] to-[#aebfd8] flex items-center justify-center gap-[1px]">
        <span className="w-px h-2 bg-[#6b7a8f]" />
        <span className="w-px h-2 bg-[#6b7a8f]" />
        <span className="w-px h-2 bg-[#6b7a8f]" />
        <span className="w-px h-2 bg-[#6b7a8f]" />
      </div>
      <div className="flex-[130]" />
      <svg className="mr-[8px]" width="5" height="8" viewBox="0 0 5 8"><path d="M0 0v8l5-4z" fill="#2f4064" /></svg>
      <span className="h-[13px] w-[6px] border border-[#f4f9ff] bg-[#9db7dd]" />
    </div>
    <div className="w-[16px] bg-[#7197d0]" />
  </div>
);

const StatusBar: React.FC = () => (
  <footer className="h-[22px] shrink-0 flex items-center border-t border-[#eaf3ff] bg-linear-to-b from-[#d9e7f9] via-[#b9d2f2] to-[#d3e4fb] text-xs text-[#15294d]">
    <span className="w-[41px] h-full pl-[7px] leading-[19px] border-r border-[#8fb0da]">就绪</span>
    <div className="flex-1" />
    <div className="w-[250px] h-full pl-[5px] pb-px flex items-center border-l border-[#7f9fcc] bg-linear-to-b from-[#b9d3f5] via-[#8db0e3] to-[#a9c6ee]">
      <div className="h-[18px] w-[57px] flex border border-[#8fa9cf] bg-[#dbe6f5]">
        <button aria-label="普通" aria-pressed="true" className="flex-1 bg-[#fbd07c] flex items-center justify-center"><svg width="13" height="12" viewBox="0 0 13 12" fill="#fff" stroke="#6b6b6b"><path d="M.500.500h12v11H.500zM4.500 0v12M8.500 0v12M0 4.500h13M0 8h13" /></svg></button>
        <button aria-label="页面布局" className="flex-1 flex items-center justify-center"><svg width="12" height="12" viewBox="0 0 12 12"><path d="M0 0h12v12H0z" fill="#777" /><path d="M2.500 1.500h7v9h-7z" fill="#fff" /><path d="M4 4h4M4 6h4M4 8h4" stroke="#777" /></svg></button>
        <button aria-label="分页预览" className="flex-1 flex items-center justify-center"><svg width="12" height="12" viewBox="0 0 12 12"><path d="M0 0h12v12H0z" fill="#777" /><path d="M1 1h4v7H1zM6 1h5v7H6z" fill="#fff" /></svg></button>
      </div>
      <button className="w-[48px] text-center">115%</button>
      <button aria-label="缩小"><svg width="15" height="15" viewBox="0 0 15 15"><circle cx="7.500" cy="7.500" r="6.500" fill="#e8f0fb" stroke="#4f6d9c" /><path d="M4 7.500h7" stroke="#333" strokeWidth="2" /></svg></button>
      <div className="relative flex-1 h-[15px] flex items-center">
        <input aria-label="显示比例" type="range" min="10" max="190" defaultValue="100" className="absolute inset-0 w-full opacity-0" />
        <span className="h-px w-full bg-[#e8f1fc] border-b border-[#5f7eb0] box-content" />
        <svg className="absolute left-[46px] top-0 pointer-events-none" width="10" height="14" viewBox="0 0 10 14"><path d="M.500.500h9v8L5 13 .500 8.500z" fill="#eaf2fc" stroke="#4f6d9c" /><path d="M5 3v5" stroke="#4f6d9c" /></svg>
      </div>
      <button aria-label="放大" className="mr-[5px]"><svg width="15" height="15" viewBox="0 0 15 15"><circle cx="7.500" cy="7.500" r="6.500" fill="#e8f0fb" stroke="#4f6d9c" /><path d="M4 7.500h7M7.500 4v7" stroke="#333" strokeWidth="2" /></svg></button>
    </div>
  </footer>
);

/* ---------- Taskbar ---------- */

const Tape = (
  <svg width="34" height="28" viewBox="0 0 34 28">
    <path d="M1 4l8-3 5 2-2 4-10 1z" fill="#15a5a5" stroke="#0b4f55" strokeWidth="0.700" />
    <path d="M2 12q2-4 8-4l14-2q9 1 9 9 0 10-14 10T4 20z" fill="#2a3558" />
    <ellipse cx="19" cy="14.500" rx="12" ry="8" fill="#19a8a4" />
    <ellipse cx="19" cy="14" rx="7.500" ry="5" fill="#0d6f72" stroke="#e5e66a" strokeWidth="1.500" strokeDasharray="9 3" />
    <circle cx="19" cy="14" r="2" fill="#eaf07a" />
    <path d="M3 16l4 5 8 4" stroke="#d9ecec" strokeWidth="1.500" fill="none" strokeDasharray="3 2" />
  </svg>
);

const APPS: { name: string; look: string; icon: React.ReactNode }[] = [
  {
    name: '贝壳', look: 'w-[58px] bg-white/20',
    icon: <svg width="34" height="30" viewBox="0 0 34 30"><path d="M16 29Q2 24 1 14q0-6 5-7 2-6 8-5 6-3 10 2 7 1 8 8 0 8-6 14z" fill="#ffdf8f" stroke="#e08a1c" /><path d="M16 28L6 8M16 28l-3-25M17 28l6-24M18 28L30 9M15 28L2 15" stroke="#ef9d2c" /><path d="M22 12l2 5 7 1-5 3 1 7-5-4-5 4 1-7-5-3 7-1z" fill="#f07f16" stroke="#b84e07" strokeWidth="0.800" /></svg>,
  },
  {
    name: '记事本', look: 'w-[58px] bg-white/20',
    icon: <svg width="26" height="28" viewBox="0 0 26 28"><rect x="0.500" y="0.500" width="25" height="27" rx="2" fill="#fff" stroke="#c0d8e4" /><path d="M3 4h20M3 8h20M3 12h20M3 16h20M3 20h20M3 24h20" stroke="#2e9cc8" strokeWidth="2" /></svg>,
  },
  {
    name: '磁盘工具', look: 'w-[58px] bg-white/20',
    icon: <svg width="30" height="31" viewBox="0 0 30 31"><path d="M0 0h27l3 3v28H0z" fill="#1030c0" /><path d="M8 0h15v10H8z" fill="#e9e9f2" /><path d="M17 2h4v7h-4z" fill="#1030c0" /><path d="M3 13h24v16H3z" fill="#fff" /><path d="M5 17h20M5 21h20M5 25h10" stroke="#b03030" /><text x="16" y="28" fontSize="7" fontWeight="bold" fill="#111">64</text></svg>,
  },
  {
    name: 'Genesis', look: 'w-[58px] bg-white/20',
    icon: <svg width="30" height="30" viewBox="0 0 30 30"><path d="M27 2q-6 6-14 6-8 2-9 11 0 8 8 8 8 1 11-3l2-9H14" fill="none" stroke="#8e1d14" strokeWidth="5.500" /><path d="M27 2q-6 6-14 6-8 2-9 11 0 8 8 8 8 1 11-3l2-9H14" fill="none" stroke="#e03222" strokeWidth="4" /></svg>,
  },
  {
    name: '钉钉', look: 'w-[58px] bg-white/20',
    icon: <svg width="32" height="32" viewBox="0 0 32 32"><circle cx="16" cy="16" r="16" fill="#2b9ae8" /><path d="M7 6q8 5 16 6 3 1 1 4l-3 5h2l-7 8 1-6h-3l2-3q-5-1-6-4l4 0q-5-2-6-5l4 0Q8 9 7 6z" fill="#fff" /></svg>,
  },
  {
    name: 'PCB', look: 'w-[58px] bg-white/20',
    icon: <svg width="30" height="30" viewBox="0 0 30 30" fill="none"><path d="M1 28L8 3h14" stroke="#2e8f4e" strokeWidth="2" /><path d="M10 8h12q5 1 4 6t-7 5h-7M17 11l-4 18" stroke="#1f9a4a" strokeWidth="5" /></svg>,
  },
  { name: 'InCAM', look: 'w-[59px] bg-linear-to-r from-white/15 to-[#d8a898]/60', icon: Tape },
  {
    name: 'Xmanager', look: 'w-[52px] bg-linear-to-b from-[#fde08a] via-[#fdb03a] to-[#ffd95e]',
    icon: <svg width="32" height="28" viewBox="0 0 32 28"><path d="M1 1h8l22 26h-8z" fill="#8b1578" stroke="#111" /><path d="M29 1L3 27" stroke="#111" strokeWidth="3" /><path d="M29 1L3 27" stroke="#8b1578" strokeWidth="1" /></svg>,
  },
  {
    name: 'Word', look: 'w-[58px] ml-[6px] bg-linear-to-r from-[#cdb8a4]/70 to-[#c99a80]/80 shadow-[-4px_0_0_-1px_rgba(255,255,255,0.25)]',
    icon: <svg width="32" height="31" viewBox="0 0 32 31"><path d="M3 26q-6-19 10-25l8 2v24z" fill="#4d83c4" stroke="#f2f7fd" strokeWidth="1.500" /><rect x="8.500" y="4.500" width="22" height="22" fill="#fdfdff" stroke="#9fb3cf" transform="rotate(4 19 15)" /><path d="M24 10h4M24 14h4M24 18h4M12 23h16" stroke="#5b86bd" strokeWidth="1.500" /><text x="9" y="19" fontSize="15" fontWeight="bold" fontFamily="Liberation Serif" fill="#1e4a94">W</text></svg>,
  },
  {
    name: 'Excel', look: 'w-[51px] bg-white/65',
    icon: <svg width="32" height="31" viewBox="0 0 32 31"><path d="M3 26q-6-19 10-25l8 2v24z" fill="#6fae55" stroke="#f2f7fd" strokeWidth="1.500" /><rect x="8.500" y="4.500" width="22" height="22" fill="#fdfffd" stroke="#9fc09a" transform="rotate(4 19 15)" /><path d="M23 10h5v4h-5zM23 16h5v3h-5zM11 21h5v3h-5zM18 21h4v3h-4zM24 21h4v3h-4z" fill="#5d9a48" /><path d="M10 7l10 12M19 7l-9 12" stroke="#2f7a2b" strokeWidth="3.500" /></svg>,
  },
  { name: 'InCAM 2', look: 'w-[59px] ml-[6px] bg-linear-to-r from-[#d8b8a8]/70 to-[#c8a8a0]/60 shadow-[-4px_0_0_-1px_rgba(255,255,255,0.25)]', icon: Tape },
];

const Taskbar: React.FC = () => (
  <div className="relative h-[39px] shrink-0 border-t border-[#1f1f1a] flex items-center overflow-hidden bg-[#63624a]">
    <svg className="absolute inset-0 w-full h-full" viewBox="0 0 1920 39" preserveAspectRatio="none">
      <defs>
        <filter id="haze" x="-5%" y="-50%" width="110%" height="200%"><feGaussianBlur stdDeviation="6 3" /></filter>
      </defs>
      <g filter="url(#haze)">
        <rect x="-20" y="-5" width="90" height="50" fill="#3d3a30" />
        <rect x="70" y="-5" width="320" height="50" fill="#6d6a56" />
        <rect x="740" y="-5" width="28" height="50" fill="#b98f9a" />
        <path d="M755 45V20l10-18 15 43z" fill="#c9a04e" />
        <path d="M790 20l20-22h10l-12 30z" fill="#c26f3c" />
        <path d="M795 42L822-2h12l-18 44z" fill="#c8a79a" />
        <rect x="830" y="-5" width="60" height="50" fill="#76745a" />
        <path d="M878-5h32l-8 20v30h-20V15zM1003-5h30l-8 20v30h-18V15zM1060-5h36l-10 20v30h-18V15z" fill="#bdb293" />
        <path d="M940-5h25v18l30 15-10 17h-48z" fill="#54381a" />
        <rect x="1100" y="-5" width="135" height="50" fill="#62613f" />
        <path d="M1290-5h22v50h-65V32l42-8z" fill="#a58f72" />
        <path d="M1448 18l10-20h18l-10 30v20h-12V22z" fill="#6b4f26" />
        <ellipse cx="1525" cy="6" rx="20" ry="8" fill="#8f7048" />
        <rect x="1550" y="-5" width="100" height="50" fill="#5c5a46" />
        <rect x="1650" y="-5" width="290" height="50" fill="#494538" />
      </g>
      <path d="M0 .500h1920" stroke="#fff" opacity="0.35" />
    </svg>
    <button aria-label="开始菜单" className="relative ml-[8px] mr-[13px]">
      <svg width="38" height="38" viewBox="0 0 38 38">
        <defs><radialGradient id="start" cx="0.5" cy="0.8" r="0.8"><stop offset="0" stopColor="#4fc3f0" /><stop offset="0.5" stopColor="#1f6ba5" /><stop offset="1" stopColor="#0e2c4e" /></radialGradient></defs>
        <circle cx="19" cy="19" r="17.500" fill="url(#start)" stroke="#9fb9cf" />
        <path d="M10 11q4-3 8-1l-1 8q-4-2-8 1z" fill="#e8542a" /><path d="M20 11q4 2 8-1l-1 8q-4 3-8 1z" fill="#8cc63c" />
        <path d="M9 21q4-3 8-1l-1 8q-4-2-8 1z" fill="#3fa4e0" /><path d="M19 21q4 2 8-1l-1 8q-4 3-8 1z" fill="#fbc52c" />
        <ellipse cx="19" cy="10" rx="14" ry="8" fill="#fff" opacity="0.25" />
      </svg>
    </button>
    <div className="relative flex gap-1">
      {APPS.map(a => (
        <button key={a.name} aria-label={a.name} className={`h-[38px] shrink-0 rounded-[3px] border border-[#2b2a22]/70 inset-ring inset-ring-white/40 flex items-center justify-center ${a.look}`}>{a.icon}</button>
      ))}
    </div>
    <div className="relative ml-auto flex items-center h-full">
      <div className="flex items-center gap-[9px] mr-[15px]">
        <svg className="mr-[3px]" width="15" height="15" viewBox="0 0 15 15"><path d="M7 4q0-2 3-2t4-2" stroke="#ddd" fill="none" /><rect x="0.500" y="5.500" width="14" height="8" rx="1" fill="#eee" stroke="#888" /><path d="M2 8h11M2 10h11M4 12h7" stroke="#666" strokeDasharray="1 1" /></svg>
        <svg width="15" height="15" viewBox="0 0 15 15"><circle cx="7.500" cy="7.500" r="7" fill="#1a2fa8" stroke="#c5cdf2" /><text x="7.500" y="11.500" fontSize="11" fontWeight="bold" textAnchor="middle" fill="#fff">?</text></svg>
        <svg width="9" height="18" viewBox="0 0 9 18"><path d="M3 3V1h5v5H6M1 3.500h5v4H1z" fill="none" stroke="#fff" /><path d="M2 14h6l-3 3z" fill="#fff" /></svg>
        <svg width="9" height="5" viewBox="0 0 9 5"><path d="M0 5h9L4.500 0z" fill="#fff" /></svg>
        <svg className="ml-1" width="16" height="14" viewBox="0 0 16 14"><path d="M1 5h3l4-4v12L4 9H1z" fill="#fff" /><path d="M10 5q1 2 0 4M12 3q2 4 0 8M14 1q3 6 0 12" stroke="#fff" fill="none" /></svg>
        <svg width="16" height="15" viewBox="0 0 16 15" fill="none" stroke="#fff" strokeWidth="1.500"><path d="M6 3h8v8H5M8 14h6M10 11v3M1 1v3h3V1M2.500 4v9" /></svg>
        <svg width="16" height="15" viewBox="0 0 16 15"><path d="M2 1v13" stroke="#fff" strokeWidth="1.500" /><path d="M3 1h5l1 1h5v7H8L7 8H3z" fill="#fff" /><circle cx="11" cy="10" r="4.500" fill="#dc2a20" /><path d="M9 8l4 4M13 8l-4 4" stroke="#fff" strokeWidth="1.500" /></svg>
      </div>
      <div className="w-[62px] text-center text-xs leading-[18px] text-white">20:46<br />2021/6/23</div>
      <button aria-label="显示桌面" className="ml-[8px] w-[13px] h-full border border-[#a8a69a] bg-white/15" />
    </div>
  </div>
);

const App: React.FC = () => (
  <div className="relative h-screen flex flex-col overflow-hidden bg-white font-['Open_Sans','Noto_Sans_CJK_SC',sans-serif]">
    <TitleBar />
    <TabStrip />
    <Ribbon />
    <FormulaBar />
    <main className="flex-1 min-h-0 flex">
      <div className="relative flex-1 min-w-0 overflow-hidden bg-white">
        <Sheet />
        <CircuitDrawing />
        {/* highlight box floating over rows 86-87 */}
        <div className="absolute left-[104px] top-[407px] w-[652px] h-[92px] border-4 border-[#ffff1a] shadow-[2px_2px_4px_rgba(0,0,0,0.6),inset_2px_2px_4px_rgba(0,0,0,0.6)]" />
      </div>
      <VerticalScrollbar />
    </main>
    <SheetTabs />
    <StatusBar />
    <Taskbar />
  </div>
);

export default App;
